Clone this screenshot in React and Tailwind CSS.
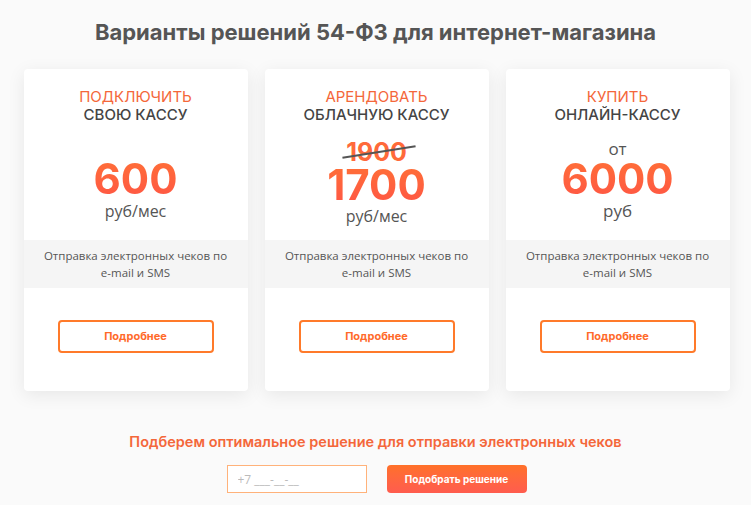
import React from 'react';

const heading = { fontFamily: 'Inter, "Open Sans", sans-serif' };

function Card({ top, bottom, children }) {
  return (
    <div className="w-[224px] h-[322px] bg-white rounded shadow-[0_4px_18px_rgba(0,0,0,0.08)] flex flex-col">
      <div className="h-[171px] flex flex-col items-center pt-[19px]">
        <div className="text-[15px] leading-[18px] text-[#f4673a] uppercase" style={heading}>{top}</div>
        <div className="text-[15px] leading-[18px] text-[#444] uppercase font-medium" style={heading}>{bottom}</div>
        {children}
      </div>
      <div className="h-[48px] bg-[#f5f5f5] flex items-center justify-center text-center text-[11.5px] leading-[17px] text-[#555] px-4">
        Отправка электронных чеков по<br />e-mail и SMS
      </div>
      <div className="flex-1 flex items-start justify-center pt-[32px]">
        <button className="w-[156px] h-[33px] border-2 border-[#ff7a2a] rounded text-[11px] font-bold text-[#ff6a2a]" style={heading}>
          Подробнее
        </button>
      </div>
    </div>
  );
}

const price = 'font-bold bg-gradient-to-b from-[#ff6f36] to-[#ff5544] bg-clip-text text-transparent';

function App() {
  return (
    <div className="w-[751px] h-[505px] bg-[#fafafa] flex flex-col items-center" style={{ fontFamily: '"Open Sans", sans-serif' }}>
      <h1 className="mt-[17px] text-[22px] leading-[30px] font-bold text-[#555]" style={heading}>
        Варианты решений 54-ФЗ для интернет-магазина
      </h1>
      <div className="mt-[22px] flex gap-[17px] pl-[2px]">
        <Card top="Подключить" bottom="Свою кассу">
          <div className={`mt-[33px] text-[42px] leading-[44px] ${price}`} style={heading}>600</div>
          <div className="text-[16px] leading-[20px] text-[#555]">руб/мес</div>
        </Card>
        <Card top="Арендовать" bottom="Облачную кассу">
          <div className="relative mt-[16px]">
            <div className="text-[25px] leading-[24px] font-bold text-[#ff6a3a]" style={heading}>1900</div>
            <div className="absolute left-[-4px] top-[11px] w-[74px] h-[2px] bg-[#555] -rotate-[9deg]" />
          </div>
          <div className={`text-[42px] leading-[42px] ${price}`} style={heading}>1700</div>
          <div className="text-[16px] leading-[20px] text-[#555]">руб/мес</div>
        </Card>
        <Card top="Купить" bottom="Онлайн-кассу">
          <div className="mt-[16px] text-[17px] leading-[17px] text-[#555]">от</div>
          <div className={`text-[42px] leading-[44px] ${price}`} style={heading}>6000</div>
          <div className="text-[17px] leading-[20px] text-[#555]">руб</div>
        </Card>
      </div>
      <div className="mt-[41px] text-[14.5px] leading-[20px] font-semibold text-[#f4673a]" style={heading}>
        Подберем оптимальное решение для отправки электронных чеков
      </div>
      <div className="mt-[13px] flex gap-[20px] pl-[2px]">
        <input
          placeholder="+7 ___-__-__"
          className="w-[140px] h-[28px] border border-[#ffb27a] bg-white px-[10px] text-[12px] placeholder:text-[#bbb] outline-none"
        />
        <button className="w-[140px] h-[28px] bg-gradient-to-b from-[#ff7028] to-[#ff5c4e] text-white text-[10px] font-bold rounded-sm" style={heading}>
          Подобрать решение
        </button>
      </div>
    </div>
  );
}

export default App;
